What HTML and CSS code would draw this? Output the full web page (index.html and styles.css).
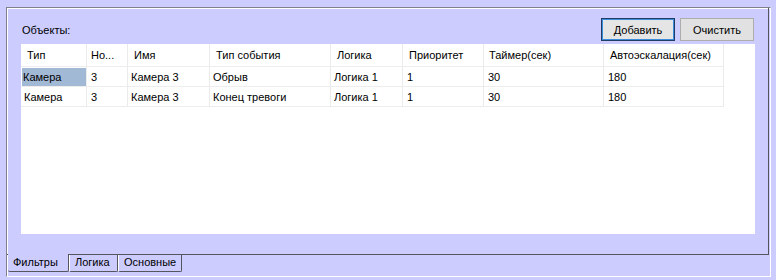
FILE: index.html
```html
<!DOCTYPE html>
<html lang="ru">
<head>
    <meta charset="UTF-8">
    <title>Фильтры</title>
    <link rel="stylesheet" href="styles.css">
</head>
<body>
    <div class="frame">
        <div class="page">
            <div class="toolbar">
                <span class="caption">Объекты:</span>
                <button class="btn btn-default">Добавить</button>
                <button class="btn">Очистить</button>
            </div>
            <div class="grid">
                <table>
                    <thead>
                        <tr>
                            <th>Тип</th>
                            <th>Но...</th>
                            <th>Имя</th>
                            <th>Тип события</th>
                            <th>Логика</th>
                            <th>Приоритет</th>
                            <th>Таймер(сек)</th>
                            <th>Автоэскалация(сек)</th>
                        </tr>
                    </thead>
                    <tbody>
                        <tr>
                            <td class="selected">Камера</td>
                            <td>3</td>
                            <td>Камера 3</td>
                            <td>Обрыв</td>
                            <td>Логика 1</td>
                            <td>1</td>
                            <td>30</td>
                            <td>180</td>
                        </tr>
                        <tr>
                            <td>Камера</td>
                            <td>3</td>
                            <td>Камера 3</td>
                            <td>Конец тревоги</td>
                            <td>Логика 1</td>
                            <td>1</td>
                            <td>30</td>
                            <td>180</td>
                        </tr>
                    </tbody>
                </table>
            </div>
        </div>
        <div class="tabs">
            <span class="tab active">Фильтры</span>
            <span class="tab tab-logic">Логика</span>
            <span class="tab tab-main">Основные</span>
        </div>
    </div>
</body>
</html>
```

FILE: styles.css
```css
* {
    box-sizing: border-box;
}
body {
    margin: 0;
    background: #ccccff;
    font-family: "Liberation Sans", Arial, sans-serif;
    font-size: 11px;
    color: #000;
    height: 280px;
    overflow: hidden;
}
.frame {
    margin: 7px 0 0 6px;
    width: 765px;
    height: 270px;
    border-left: 1px solid #80808c;
    border-top: 1px solid #80808c;
    border-right: 1px solid #fff;
    border-bottom: 1px solid #fff;
    box-shadow: inset 1px 1px 0 #fff;
}
.page {
    width: 762px;
    height: 247px;
    padding: 10px 13px 0 14px;
    border-right: 1px solid #55555f;
    border-bottom: 1px solid #55555f;
}
.toolbar {
    display: flex;
    align-items: center;
    height: 23px;
    padding-right: 1px;
}
.caption {
    margin-right: auto;
    padding-left: 1px;
}
.btn {
    width: 74px;
    height: 23px;
    padding: 0;
    font-family: inherit;
    font-size: 11px;
    color: #000;
    background: #e1e1e1;
    border: 1px solid #adadad;
}
.btn + .btn {
    margin-left: 5px;
}
.btn-default {
    border-color: #1f3d66;
    box-shadow: inset 0 0 0 1px #3c8cdc;
    background: #e5e5e5;
}
.grid {
    margin-top: 3px;
    height: 190px;
    background: #fff;
}
table {
    border-collapse: separate;
    border-spacing: 0;
    table-layout: fixed;
    width: 703px;
}
th, td {
    border-right: 1px solid #ebebeb;
    border-bottom: 1px solid #ededed;
    white-space: nowrap;
    overflow: hidden;
    vertical-align: middle;
}
th {
    height: 23px;
    padding: 0 0 1px 6px;
    font-weight: normal;
    text-align: left;
}
td {
    height: 20px;
    padding: 0 0 0 3px;
}
th:nth-child(1) { width: 66px; }
th:nth-child(2) { width: 41px; padding-left: 4px; }
th:nth-child(3) { width: 82px; }
th:nth-child(4) { width: 121px; }
th:nth-child(5) { width: 72px; }
th:nth-child(6) { width: 81px; }
th:nth-child(7) { width: 120px; padding-left: 5px; }
th:nth-child(8) { width: 120px; }
td:nth-child(2),
td:nth-child(6),
td:nth-child(7),
td:nth-child(8) {
    padding-left: 4px;
}
td.selected {
    background: #a2b9d6;
    box-shadow: inset 1px 1px 0 #fff;
    padding-left: 2px;
}
.tabs {
    display: flex;
    align-items: flex-start;
    margin-left: 1px;
}
.tab {
    height: 17px;
    line-height: 15px;
    padding: 0 0 0 5px;
    border-left: 1px solid #fff;
    border-right: 1px solid #55555f;
    border-bottom: 1px solid #55555f;
    border-radius: 0 0 2px 2px;
}
.tab.active {
    width: 61px;
    height: 18px;
    margin-top: -1px;
    line-height: 17px;
    border-left: none;
    background: #ccccff;
}
.tab-logic {
    width: 49px;
}
.tab-main {
    width: 64px;
}
```
